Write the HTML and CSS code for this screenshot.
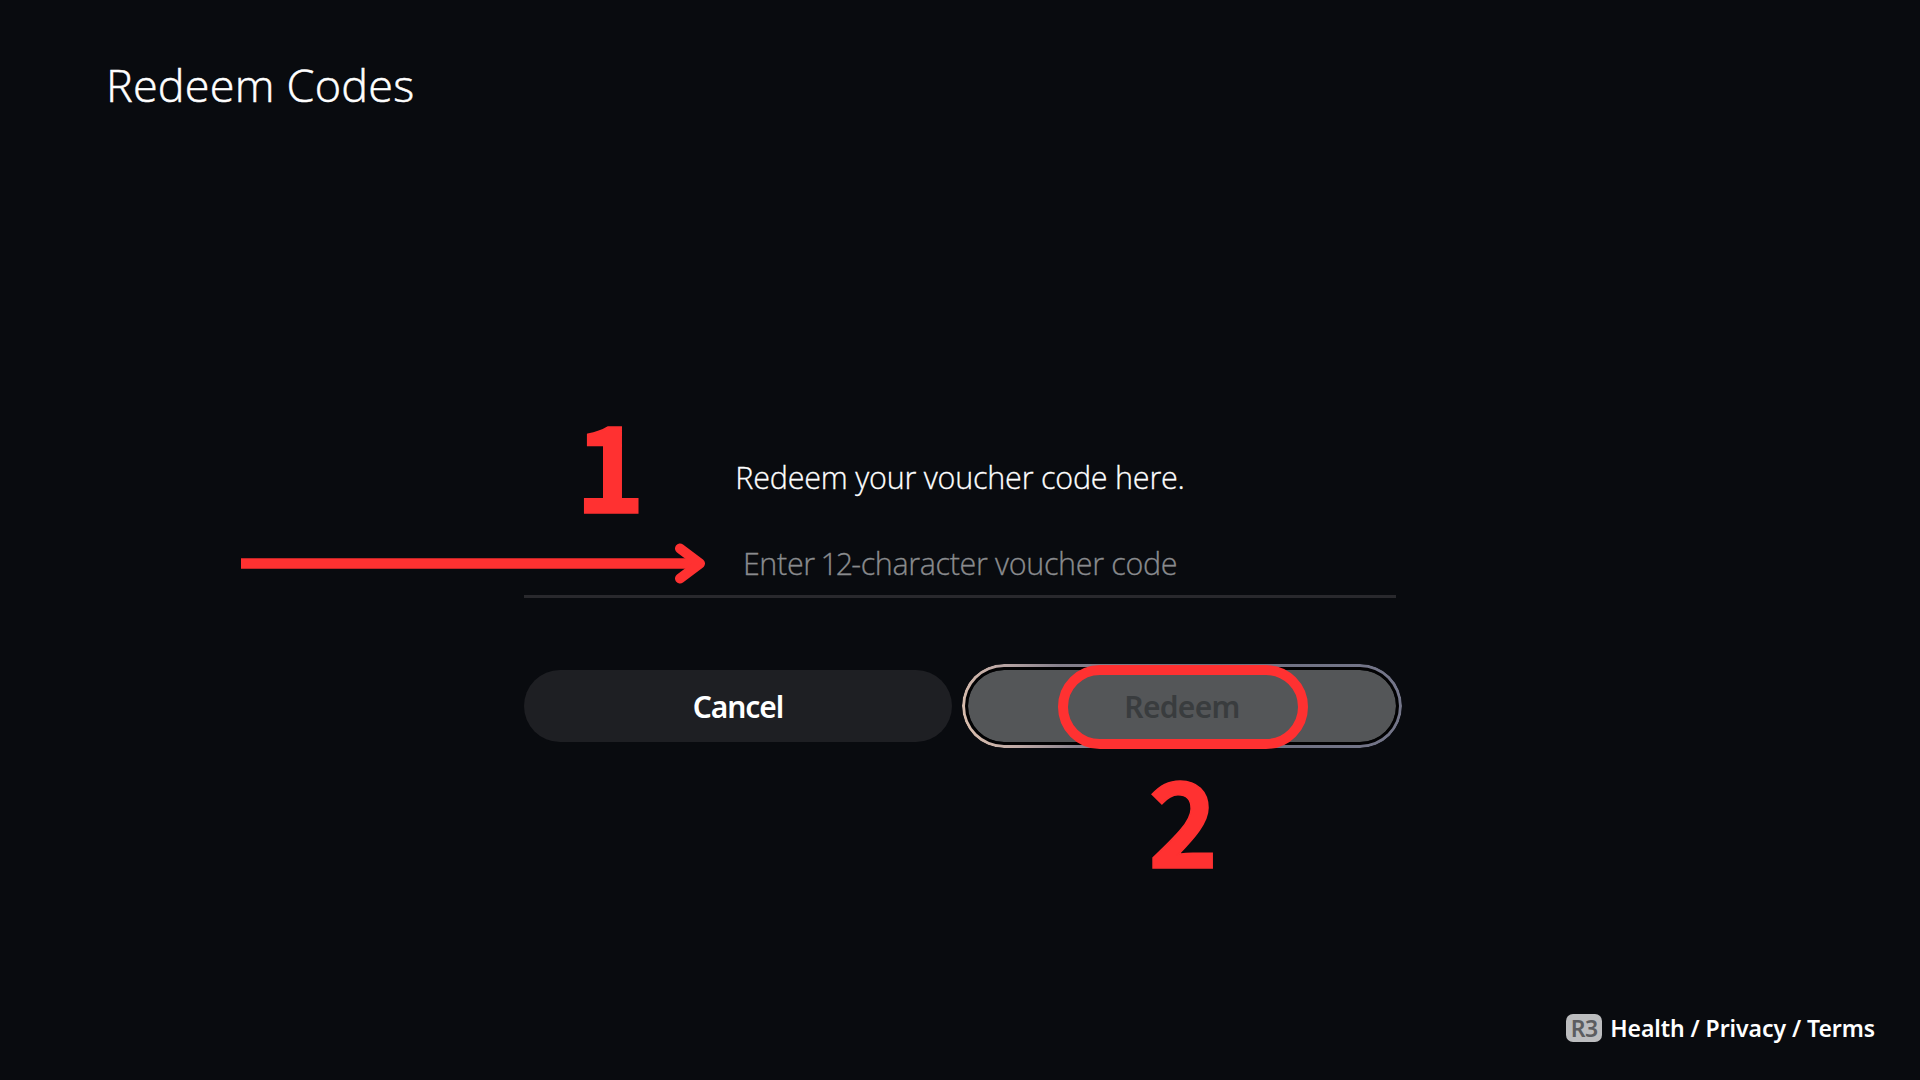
FILE: index.html
```html
<!DOCTYPE html>
<html lang="en">
<head>
    <meta charset="UTF-8">
    <meta name="viewport" content="width=device-width, initial-scale=1.0">
    <title>Redeem Codes</title>
    <link rel="stylesheet" href="styles.css">
</head>
<body>
    <h1>Redeem Codes</h1>

    <main class="container">
        <p class="description">Redeem your voucher code here.</p>
        <div class="code-field">Enter <span class="digits">12</span>-character voucher code</div>
        <div class="buttons">
            <button class="btn cancel">Cancel</button>
            <button class="btn redeem">Redeem</button>
        </div>
    </main>

    <footer class="footer">
        <span class="key">R3</span>
        <span class="links">Health / Privacy / Terms</span>
    </footer>

    <!-- Step markers -->
    <div class="step step-one">1</div>
    <svg class="arrow" width="470" height="44" viewBox="0 0 470 44">
        <path class="shaft" d="M1 22.5H455"/>
        <path class="head" d="M440 7.5L460 22.5L440 37.5"/>
    </svg>
    <div class="highlight"></div>
    <div class="step step-two">2</div>
</body>
</html>
```

FILE: styles.css
```css
* {
    box-sizing: border-box;
}
body {
    position: relative;
    display: flex;
    flex-direction: column;
    width: 1920px;
    height: 1080px;
    margin: 0;
    padding: 55px 45px 32px 106px;
    overflow: hidden;
    background-color: #090b0f;
    color: #fff;
    font-family: 'Noto Sans', 'Open Sans', sans-serif;
}
h1 {
    margin: 0;
    font-family: 'Open Sans', sans-serif;
    font-size: 45px;
    font-weight: 300;
    line-height: 60px;
    letter-spacing: 0.2px;
    -webkit-text-stroke: 0.5px #fff;
}
.container {
    width: 872px;
    margin: 342px 0 0 418px;
}
.description,
.code-field {
    font-family: 'Open Sans', sans-serif;
    font-size: 30.5px;
    font-weight: 300;
    line-height: 40px;
    text-align: center;
}
.description {
    margin: 0;
    letter-spacing: -0.22px;
    -webkit-text-stroke: 0.3px #fff;
}
.code-field {
    height: 101px;
    padding-top: 46px;
    border-bottom: 3px solid #29292d;
    color: #8a8b8e;
    letter-spacing: -0.35px;
    -webkit-text-stroke: 0.3px #8a8b8e;
}
.digits {
    margin-left: -2px;
    letter-spacing: -2px;
}
.buttons {
    display: flex;
    gap: 16px;
    margin-top: 72px;
}
.btn {
    flex: 1;
    height: 72px;
    padding: 0;
    border: none;
    border-radius: 36px;
    background-color: #1e1f23;
    color: #fff;
    font-family: inherit;
    font-size: 30px;
    font-weight: 600;
}
.cancel {
    letter-spacing: -1.1px;
}
/* Focused button: dark gap, then a gradient ring */
.redeem {
    position: relative;
    background-color: #545658;
    color: #393c3e;
    letter-spacing: -0.7px;
}
.redeem::before,
.redeem::after {
    content: '';
    position: absolute;
}
.redeem::before {
    inset: -3px;
    border: 3px solid #020203;
    border-radius: 39px;
}
.redeem::after {
    inset: -6px;
    padding: 3px;
    border-radius: 42px;
    background: linear-gradient(75deg, #dcc0ae 0%, #bfaaa6 12%, #85808c 26%, #6e7080 60%, #74768a 100%);
    mask: linear-gradient(#000 0 0) content-box exclude, linear-gradient(#000 0 0);
}
.footer {
    display: flex;
    justify-content: flex-end;
    align-items: center;
    gap: 8px;
    margin-top: auto;
    height: 40px;
}
.key {
    width: 36px;
    height: 28px;
    border-radius: 7px;
    background-color: #bcbdbf;
    color: #5c5d60;
    font-size: 23px;
    font-weight: 600;
    line-height: 28px;
    letter-spacing: -0.5px;
    text-align: center;
}
.links {
    font-size: 23px;
    font-weight: 600;
    letter-spacing: -0.06px;
}
.step {
    position: absolute;
    color: #ff3131;
    font-family: 'Noto Sans CJK SC', sans-serif;
    font-size: 119px;
    font-weight: 700;
    line-height: 120px;
    -webkit-text-stroke: 1.6px #ff3131;
}
.step-one {
    left: 575px;
    top: 401px;
}
.step-two {
    left: 1148px;
    top: 756px;
}
.arrow {
    position: absolute;
    left: 240px;
    top: 541px;
    fill: none;
    stroke: #ff3131;
}
.shaft {
    stroke-width: 10.5;
}
.head {
    stroke-width: 10;
    stroke-linecap: round;
    stroke-linejoin: round;
}
.highlight {
    position: absolute;
    left: 1058px;
    top: 665px;
    width: 250px;
    height: 84px;
    border: 10px solid #ff3131;
    border-radius: 42px;
}
```
